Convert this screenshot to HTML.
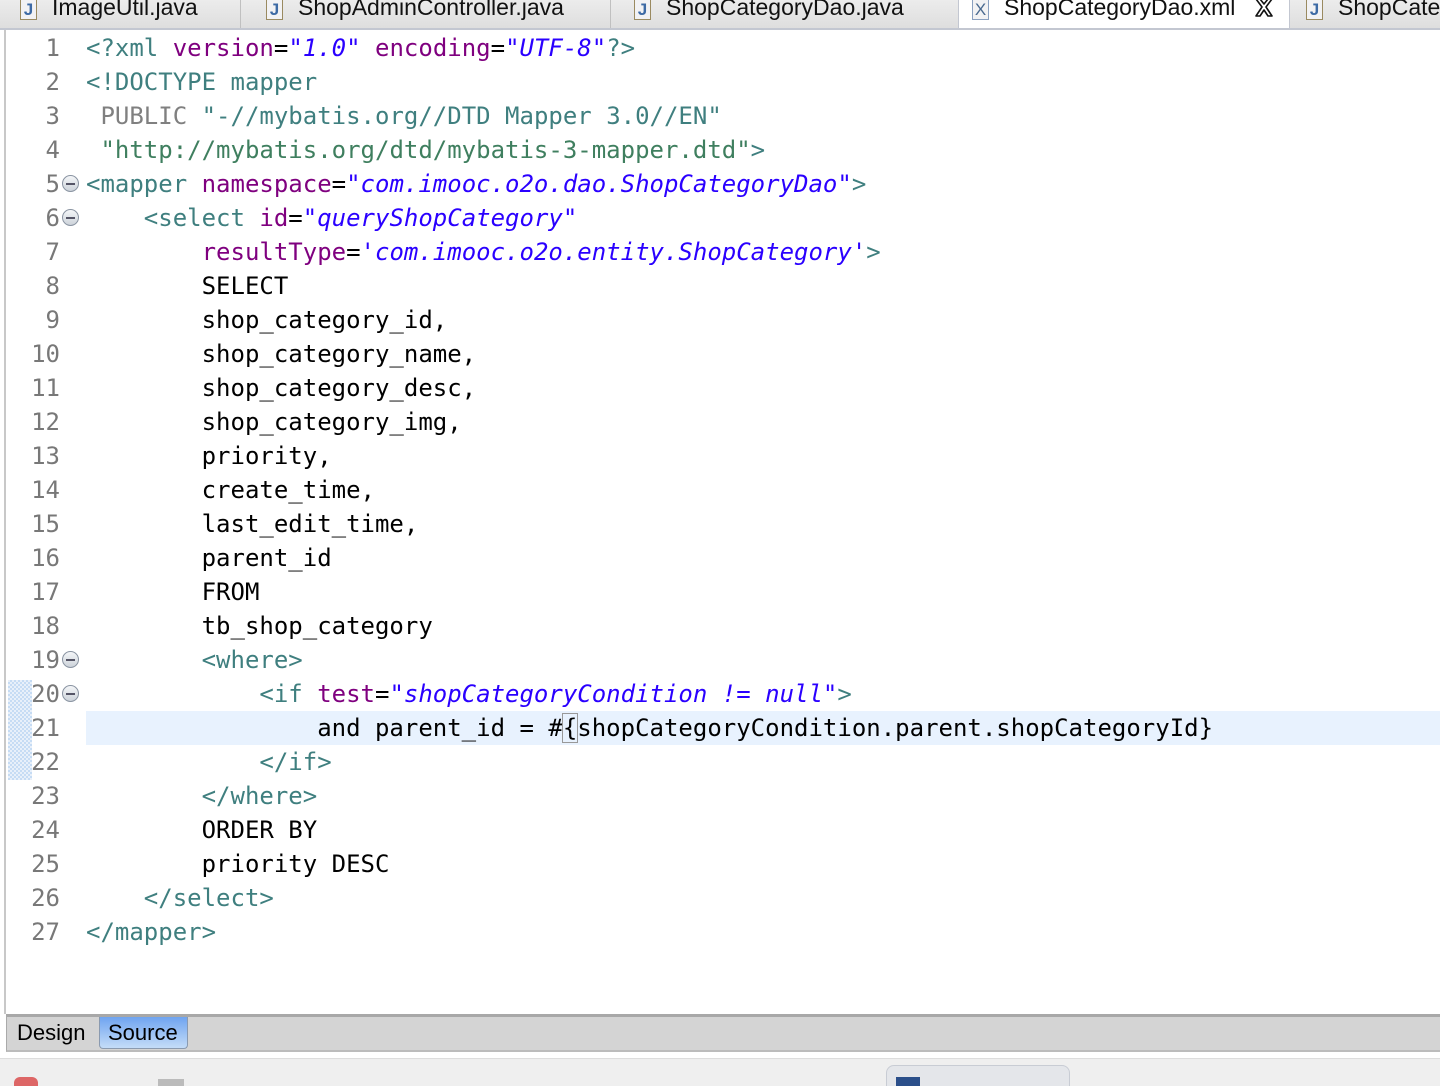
<!DOCTYPE html>
<html><head><meta charset="utf-8"><style>
*{margin:0;padding:0;box-sizing:border-box}
html,body{width:1440px;height:1086px;overflow:hidden;background:#fff;position:relative}
.tabs{position:absolute;left:0;top:0;width:1440px;height:30px;background:linear-gradient(#ececec,#dedede);border-bottom:2px solid #c3c7d1;overflow:hidden}
.tab{position:absolute;top:-8px;height:38px;font:23px "Liberation Sans",sans-serif;color:#111;line-height:30px;white-space:nowrap}
.ic{position:absolute;top:5px;width:17px;height:23px;border:1.5px solid #9a8a60;background:#f2f2f4;color:#3d6aa5;font:bold 17px "Liberation Sans",sans-serif;text-align:center;line-height:24px}
.sep{position:absolute;top:0;width:1px;height:28px;background:#c0c0c0}
.active{position:absolute;left:958px;top:0;width:332px;height:31px;background:#fff;border-left:1px solid #c3c7d1;border-right:1px solid #c3c7d1}
.ed{position:absolute;left:4px;top:30px;width:1436px;height:984px;border-left:2px solid #c8c8c8}
.ln{position:absolute;left:0;width:60px;text-align:right;font:24px "DejaVu Sans Mono",monospace;color:#787878;line-height:34px}
.code{position:absolute;left:86px;font:24px "DejaVu Sans Mono",monospace;color:#000;line-height:34px;white-space:pre}
.fold{position:absolute;left:62px;width:17px;height:17px;border-radius:50%;border:1px solid #8a94a2;background:linear-gradient(#f4f6f8,#cdd3da)}
.fold:after{content:"";position:absolute;left:3px;top:7px;width:9px;height:2px;background:#556}
.t{color:#3f7f7f}.a{color:#7f007f}.v{color:#2a00ff;font-style:italic}.g{color:#808080}.s{color:#3f7f5f}
.hl{position:absolute;left:86px;top:711px;width:1354px;height:34px;background:#e8f2fe}
.bar{position:absolute;left:6px;top:1014px;width:1434px;height:38px;background:#d4d4d4;border-top:3px solid #a8a8a8;border-bottom:2px solid #bcbcbc;border-left:1px solid #aaa}
.btab{position:absolute;top:0;height:32px;font:22px "Liberation Sans",sans-serif;line-height:32px;color:#000}
.bottom{position:absolute;left:0;top:1058px;width:1440px;height:28px;background:#efefef;border-top:1px solid #ddd;overflow:hidden}
</style></head><body>
<div class="tabs">
 <div class="active"></div>
 <div class="sep" style="left:240px"></div><div class="sep" style="left:610px"></div>
 <div class="tab" style="left:20px"><span class="ic" style="left:0">J</span><span style="position:absolute;left:32px">ImageUtil.java</span></div>
 <div class="tab" style="left:266px"><span class="ic" style="left:0">J</span><span style="position:absolute;left:32px">ShopAdminController.java</span></div>
 <div class="tab" style="left:634px"><span class="ic" style="left:0">J</span><span style="position:absolute;left:32px">ShopCategoryDao.java</span></div>
 <div class="tab" style="left:972px"><span class="ic" style="left:0;border-color:#8aa0c0;color:#4a6a90;font-weight:normal">X</span><span style="position:absolute;left:32px">ShopCategoryDao.xml</span></div>
 <div class="tab" style="left:1306px"><span class="ic" style="left:0">J</span><span style="position:absolute;left:32px">ShopCategoryDao</span></div>
</div>
<svg style="position:absolute;left:1253px;top:-2px" width="22" height="20" viewBox="0 0 22 20"><path d="M3 1 L7 1 L11 6 L15 1 L19 1 L13 9 L19 18 L15 18 L11 12 L7 18 L3 18 L9 9 Z" fill="#fff" stroke="#111" stroke-width="1.6" stroke-linejoin="round"/></svg>
<div class="ed"></div>
<div style="position:absolute;left:8px;top:680px;width:24px;height:100px;background:repeating-conic-gradient(#c6dcf4 0 25%,#e8f0fa 0 50%) 0 0/4px 4px"></div>
<div class="hl"></div>
<div class="ln" style="top:31px">1<br>2<br>3<br>4<br>5<br>6<br>7<br>8<br>9<br>10<br>11<br>12<br>13<br>14<br>15<br>16<br>17<br>18<br>19<br>20<br>21<br>22<br>23<br>24<br>25<br>26<br>27</div>
<div class="fold" style="top:175px"></div><div class="fold" style="top:209px"></div><div class="fold" style="top:651px"></div><div class="fold" style="top:685px"></div>
<div class="code" style="top:31px"><span class="t">&lt;?xml </span><span class="a">version</span>=<span class="v">"1.0"</span> <span class="a">encoding</span>=<span class="v">"UTF-8"</span><span class="t">?&gt;</span>
<span class="t">&lt;!DOCTYPE mapper</span>
 <span class="g">PUBLIC</span> <span class="t">"-//mybatis.org//DTD Mapper 3.0//EN"</span>
 <span class="s">"http://mybatis.org/dtd/mybatis-3-mapper.dtd"</span><span class="t">&gt;</span>
<span class="t">&lt;mapper </span><span class="a">namespace</span>=<span class="v">"com.imooc.o2o.dao.ShopCategoryDao"</span><span class="t">&gt;</span>
    <span class="t">&lt;select </span><span class="a">id</span>=<span class="v">"queryShopCategory"</span>
        <span class="a">resultType</span>=<span class="v">'com.imooc.o2o.entity.ShopCategory'</span><span class="t">&gt;</span>
        SELECT
        shop_category_id,
        shop_category_name,
        shop_category_desc,
        shop_category_img,
        priority,
        create_time,
        last_edit_time,
        parent_id
        FROM
        tb_shop_category
        <span class="t">&lt;where&gt;</span>
            <span class="t">&lt;if </span><span class="a">test</span>=<span class="v">"shopCategoryCondition != null"</span><span class="t">&gt;</span>
                and parent_id = #<span style="outline:1px solid #999">{</span>shopCategoryCondition.parent.shopCategoryId}
            <span class="t">&lt;/if&gt;</span>
        <span class="t">&lt;/where&gt;</span>
        ORDER BY
        priority DESC
    <span class="t">&lt;/select&gt;</span>
<span class="t">&lt;/mapper&gt;</span></div>
<div class="bar">
 <div class="btab" style="left:10px">Design</div>
 <div class="btab" style="left:92px;width:89px;padding-left:8px;background:linear-gradient(#6fa4f0,#c4dcf8);border:1px solid #8a9ab0;border-top:none;border-radius:0 0 4px 4px">Source</div>
</div>
<div class="bottom">
 <div style="position:absolute;left:886px;top:6px;width:184px;height:24px;background:#e4e6ea;border:1px solid #c8ccd4;border-radius:8px 8px 0 0"></div>
 <div style="position:absolute;left:14px;top:18px;width:24px;height:12px;border-radius:6px 6px 0 0;background:#d66"></div>
 <div style="position:absolute;left:158px;top:20px;width:26px;height:10px;background:#bbb"></div>
 <div style="position:absolute;left:896px;top:18px;width:24px;height:12px;background:#2b4f8a"></div>
</div>
</body></html>
